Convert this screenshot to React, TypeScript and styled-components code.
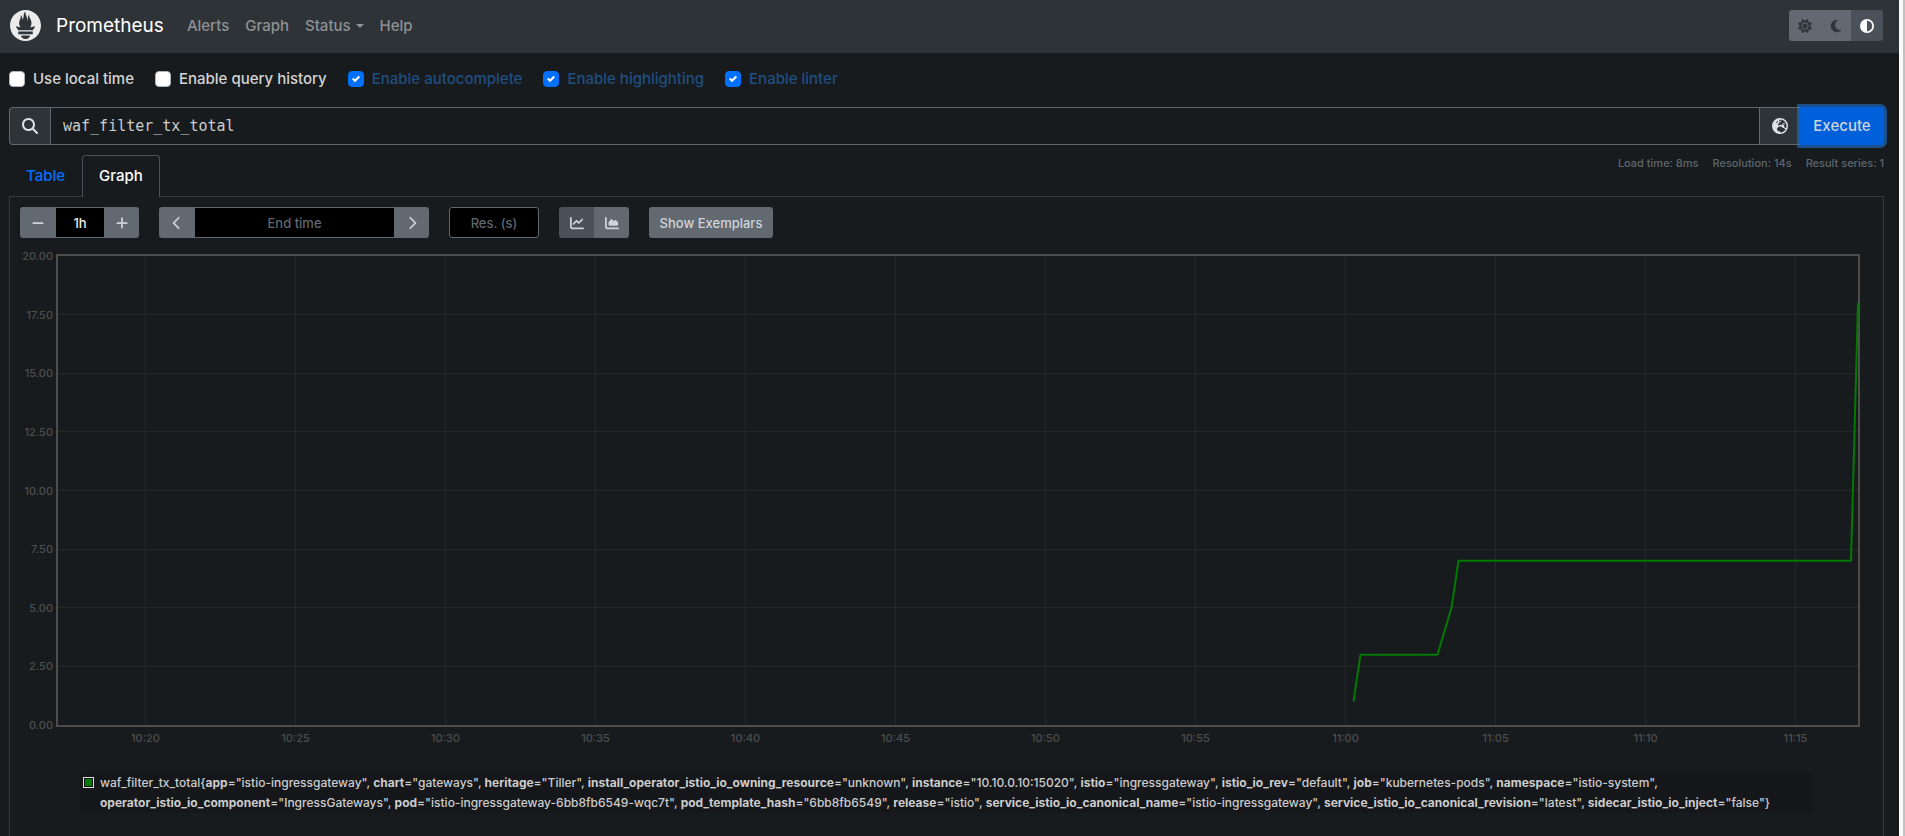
import React, { useState } from 'react';
import styled, { createGlobalStyle } from 'styled-components';
import { SiPrometheus } from 'react-icons/si';
import {
  FaChartArea,
  FaChartLine,
  FaChevronLeft,
  FaChevronRight,
  FaCircleHalfStroke,
  FaEarthEurope,
  FaMagnifyingGlass,
  FaMinus,
  FaMoon,
  FaPlus,
  FaSun,
} from 'react-icons/fa6';

const color = {
  page: '#171b1e',
  bar: '#2e3337',
  text: '#d4d4d4',
  muted: '#5f666d',
  link: '#0070ff',
  checked: '#204e80',
  line: '#343a40',
  border: '#5f6871',
  button: '#626971',
  buttonActive: '#4b5158',
  buttonText: '#ced4da',
  axis: '#4f4d4c',
  tick: '#4d4d4d',
  series: '#007a00',
};

const GlobalStyle = createGlobalStyle`
  *, *::before, *::after { box-sizing: border-box; }
  html { background: ${color.page}; }
  body {
    margin: 0;
    background: ${color.page};
    color: ${color.text};
    font-family: Inter, "Liberation Sans", sans-serif;
    font-size: 15px;
    font-weight: 500;
    line-height: 24px;
    overflow: hidden;
  }
  button, input { font: inherit; color: inherit; margin: 0; }
  a { text-decoration: none; }
`;

const Screen = styled.div`
  display: flex;
  height: 100vh;
  overflow: hidden;
`;

const Page = styled.div`
  flex: 1;
  min-width: 0;
`;

const ScrollTrack = styled.div`
  width: 6px;
  background: #fafafa;
  border-right: 2px solid #c1c1c1;
`;

const Navbar = styled.header`
  display: flex;
  align-items: center;
  justify-content: space-between;
  height: 53px;
  padding: 0 16px 2px 10px;
  background: ${color.bar};
`;

const NavGroup = styled.nav`
  display: flex;
  align-items: center;
  gap: 16px;
`;

const Brand = styled.a`
  display: flex;
  align-items: center;
  gap: 15px;
  margin-right: 7px;
  color: #ffffff;
  font-size: 19px;
  font-weight: 400;
  svg { width: 31px; height: 31px; color: #ebebeb; }
`;

const NavLink = styled.a`
  display: flex;
  align-items: center;
  gap: 5px;
  color: #8f9193;
`;

const Caret = styled.span`
  border: 4px solid transparent;
  border-top-color: currentColor;
  border-bottom: 0;
`;

const ButtonGroup = styled.div`
  display: flex;
  border-radius: 3px;
  overflow: hidden;
`;

const IconButton = styled.button<{ $active?: boolean; $width?: number }>`
  display: flex;
  align-items: center;
  justify-content: center;
  width: ${p => p.$width ?? 35}px;
  height: 31px;
  padding: 0;
  border: 0;
  background: ${p => (p.$active ? color.buttonActive : color.button)};
  color: ${color.buttonText};
  font-size: 14px;
`;

const ThemeButton = styled(IconButton)`
  color: ${p => (p.$active ? '#ffffff' : '#31363b')};
`;

const Options = styled.div`
  display: flex;
  gap: 21px;
  padding: 14px 9px 16px;
`;

const Option = styled.label<{ $on: boolean }>`
  display: flex;
  align-items: center;
  gap: 8px;
  color: ${p => (p.$on ? color.checked : color.text)};
`;

const CheckBox = styled.input`
  appearance: none;
  width: 16px;
  height: 16px;
  border: 1px solid #adb5bd;
  border-radius: 4px;
  background: #ffffff;
  &:checked {
    border-color: ${color.link};
    background: ${color.link};
  }
`;

const BoxHolder = styled.span`
  display: grid;
  > * { grid-area: 1 / 1; }
  svg { width: 8px; height: 8px; place-self: center; pointer-events: none; }
`;

const Panel = styled.main`
  padding: 0 15px 0 9px;
`;

const Expression = styled.form`
  display: flex;
  height: 38px;
`;

const Addon = styled.span`
  display: flex;
  align-items: center;
  justify-content: center;
  width: 41px;
  border: 1px solid ${color.border};
  border-right: 0;
  border-radius: 4px 0 0 4px;
  background: ${color.bar};
  color: #dee2e6;
  font-size: 16px;
`;

const ExplorerButton = styled.button`
  width: 40px;
  padding: 0;
  border: 1px solid ${color.border};
  border-width: 1px 0;
  background: ${color.bar};
  color: #dee2e6;
  font-size: 16px;
  line-height: 0;
`;

const ExpressionInput = styled.input`
  flex: 1;
  min-width: 0;
  padding: 0 12px;
  border: 1px solid ${color.border};
  background: transparent;
  color: #cccccc;
  font-family: "DejaVu Sans Mono", monospace;
  font-size: 15px;
  outline: 0;
`;

const ExecuteButton = styled.button`
  width: 84px;
  padding: 0;
  border: 0;
  border-radius: 0 4px 4px 0;
  background: #005fdb;
  box-shadow: 0 0 0 3px rgba(30, 122, 232, 0.55);
  color: #ced4da;
`;

const TabRow = styled.div`
  display: flex;
  justify-content: space-between;
  align-items: flex-start;
  padding-top: 10px;
`;

const Tabs = styled.div`
  display: flex;
  position: relative;
  z-index: 1;
  margin-bottom: -1px;
`;

const Tab = styled.a<{ $active?: boolean }>`
  height: 42px;
  padding: 8px 16px;
  border: 1px solid ${p => (p.$active ? '#495057' : 'transparent')};
  border-bottom: 0;
  border-radius: 4px 4px 0 0;
  background: ${p => (p.$active ? color.page : 'transparent')};
  color: ${p => (p.$active ? '#ffffff' : color.link)};
`;

const Stats = styled.div`
  display: flex;
  gap: 14px;
  color: ${color.muted};
  font-size: 11px;
  line-height: 16px;
`;

const TabContent = styled.section`
  min-height: 100vh;
  padding: 10px;
  border: 1px solid ${color.line};
  font-size: 14px;
`;

const Controls = styled.div`
  display: flex;
  gap: 20px;
  height: 31px;
`;

const SmallInput = styled.input<{ $width: number; $alone?: boolean }>`
  width: ${p => p.$width}px;
  height: 31px;
  padding: 0;
  border: solid ${color.border};
  border-width: ${p => (p.$alone ? '1px' : '1px 0')};
  border-radius: ${p => (p.$alone ? '3px' : '0')};
  background: #000000;
  color: #eeeeee;
  text-align: center;
  font-size: 13px;
  outline: 0;
  &::placeholder { color: ${color.muted}; opacity: 1; }
`;

const TextButton = styled.button`
  width: 124px;
  padding: 0;
  border: 0;
  border-radius: 3px;
  background: ${color.button};
  color: ${color.buttonText};
  font-size: 13px;
`;

const Chart = styled.div`
  display: grid;
  grid-template-columns: 36px 1fr;
  margin: 16px 13px 0 0;
`;

const PlotFrame = styled.div`
  height: 473px;
  border: 2px solid ${color.axis};
`;

const Drawing = styled.svg`
  display: block;
  width: 100%;
  height: 100%;
  overflow: visible;
  line { stroke: #25282a; stroke-width: 1; shape-rendering: crispEdges; }
  text { fill: ${color.tick}; font-size: 11px; }
  polyline { fill: none; stroke: ${color.series}; stroke-width: 2; stroke-linejoin: round; }
`;

const Legend = styled.div`
  display: flex;
  gap: 6px;
  width: fit-content;
  max-width: 1733px;
  margin: 46px 60px 0;
  padding: 0 14px 0 3px;
  border-radius: 4px;
  background: #15171a;
  color: #cccccc;
  font-size: 12px;
  line-height: 20px;
`;

const Swatch = styled.span`
  flex: none;
  width: 11px;
  height: 11px;
  margin-top: 4px;
  border: 1px solid #dddddd;
  background: ${color.series};
  box-shadow: inset 0 0 0 1px #111111;
`;

const times = ['10:20', '10:25', '10:30', '10:35', '10:40', '10:45', '10:50', '10:55', '11:00', '11:05', '11:10', '11:15'];
const values = [20, 17.5, 15, 12.5, 10, 7.5, 5, 2.5, 0];

/* Seconds since the start of the one-hour window, and the value then. */
const samples: [number, number][] = [
  [2591, 1],
  [2605, 3],
  [2759, 3],
  [2787, 5],
  [2801, 7],
  [3586, 7],
  [3600, 18],
];

const labels: [string, string][] = [
  ['app', 'istio-ingressgateway'],
  ['chart', 'gateways'],
  ['heritage', 'Tiller'],
  ['install_operator_istio_io_owning_resource', 'unknown'],
  ['instance', '10.10.0.10:15020'],
  ['istio', 'ingressgateway'],
  ['istio_io_rev', 'default'],
  ['job', 'kubernetes-pods'],
  ['namespace', 'istio-system'],
  ['operator_istio_io_component', 'IngressGateways'],
  ['pod', 'istio-ingressgateway-6bb8fb6549-wqc7t'],
  ['pod_template_hash', '6bb8fb6549'],
  ['release', 'istio'],
  ['service_istio_io_canonical_name', 'istio-ingressgateway'],
  ['service_istio_io_canonical_revision', 'latest'],
  ['sidecar_istio_io_inject', 'false'],
];

const NoWrap = styled.span`
  white-space: nowrap;
`;

const timeX = (i: number) => `${((175 + i * 300) / 3600) * 100}%`;
const valueY = (v: number) => `${100 - v * 5}%`;

function Graph() {
  return (
    <Drawing role="img" aria-label="waf_filter_tx_total over the last hour">
      {times.map((t, i) => (
        <g key={t}>
          <line x1={timeX(i)} x2={timeX(i)} y1="0" y2="100%" />
          <text x={timeX(i)} y="100%" dy="17" textAnchor="middle">{t}</text>
        </g>
      ))}
      {values.map(v => (
        <g key={v}>
          {v > 0 && v < 20 && <line x1="0" x2="100%" y1={valueY(v)} y2={valueY(v)} />}
          <text x="0" y={valueY(v)} dx="-5" dy="4" textAnchor="end">{v.toFixed(2)}</text>
        </g>
      ))}
      <svg width="100%" height="100%" viewBox="0 0 3600 20" preserveAspectRatio="none" overflow="visible">
        <polyline
          vectorEffect="non-scaling-stroke"
          points={samples.map(([t, v]) => `${t},${20 - v}`).join(' ')}
        />
      </svg>
    </Drawing>
  );
}

function ToggleOption({ label, initial }: { label: string; initial: boolean }) {
  const [on, setOn] = useState(initial);
  return (
    <Option $on={on}>
      <BoxHolder>
        <CheckBox type="checkbox" checked={on} onChange={e => setOn(e.target.checked)} />
        {on && (
          <svg viewBox="0 0 8 8">
            <path fill="#fff" d="M6.564.75l-3.59 3.612-1.538-1.55L0 4.26l2.974 2.99L8 2.193z" />
          </svg>
        )}
      </BoxHolder>
      {label}
    </Option>
  );
}

export default function App() {
  const [query, setQuery] = useState('waf_filter_tx_total');
  return (
    <Screen>
      <GlobalStyle />
      <Page>
        <Navbar>
          <NavGroup>
            <Brand href="#"><SiPrometheus />Prometheus</Brand>
            <NavLink href="#alerts">Alerts</NavLink>
            <NavLink href="#graph">Graph</NavLink>
            <NavLink href="#status">Status<Caret /></NavLink>
            <NavLink href="#help">Help</NavLink>
          </NavGroup>
          <ButtonGroup>
            <ThemeButton $width={31} aria-label="Light theme"><FaSun /></ThemeButton>
            <ThemeButton $width={31} aria-label="Dark theme"><FaMoon /></ThemeButton>
            <ThemeButton $width={32} $active aria-label="Browser theme"><FaCircleHalfStroke /></ThemeButton>
          </ButtonGroup>
        </Navbar>
        <Options>
          <ToggleOption label="Use local time" initial={false} />
          <ToggleOption label="Enable query history" initial={false} />
          <ToggleOption label="Enable autocomplete" initial />
          <ToggleOption label="Enable highlighting" initial />
          <ToggleOption label="Enable linter" initial />
        </Options>
        <Panel>
          <Expression onSubmit={e => e.preventDefault()}>
            <Addon><FaMagnifyingGlass /></Addon>
            <ExpressionInput
              aria-label="Expression"
              spellCheck={false}
              value={query}
              onChange={e => setQuery(e.target.value)}
            />
            <ExplorerButton type="button" aria-label="Open metrics explorer"><FaEarthEurope /></ExplorerButton>
            <ExecuteButton type="submit">Execute</ExecuteButton>
          </Expression>
          <TabRow>
            <Tabs>
              <Tab href="#table">Table</Tab>
              <Tab href="#graph" $active>Graph</Tab>
            </Tabs>
            <Stats>
              <span>Load time: 8ms</span>
              <span>Resolution: 14s</span>
              <span>Result series: 1</span>
            </Stats>
          </TabRow>
          <TabContent>
            <Controls>
              <ButtonGroup>
                <IconButton $width={36} aria-label="Decrease range"><FaMinus /></IconButton>
                <SmallInput $width={48} aria-label="Range" defaultValue="1h" />
                <IconButton aria-label="Increase range"><FaPlus /></IconButton>
              </ButtonGroup>
              <ButtonGroup>
                <IconButton $width={36} aria-label="Earlier"><FaChevronLeft /></IconButton>
                <SmallInput $width={199} aria-label="End time" placeholder="End time" />
                <IconButton aria-label="Later"><FaChevronRight /></IconButton>
              </ButtonGroup>
              <SmallInput $width={90} $alone aria-label="Resolution in seconds" placeholder="Res. (s)" />
              <ButtonGroup>
                <IconButton $active aria-label="Line graph"><FaChartLine /></IconButton>
                <IconButton aria-label="Stacked graph"><FaChartArea /></IconButton>
              </ButtonGroup>
              <TextButton>Show Exemplars</TextButton>
            </Controls>
            <Chart>
              <span />
              <PlotFrame><Graph /></PlotFrame>
            </Chart>
            <Legend>
              <Swatch />
              <div>
                waf_filter_tx_total{'{'}
                {labels.map(([name, value], i) => (
                  <React.Fragment key={name}>
                    <NoWrap><b>{name}</b>="{value}"{i < labels.length - 1 ? ',' : '}'}</NoWrap>{' '}
                  </React.Fragment>
                ))}
              </div>
            </Legend>
          </TabContent>
        </Panel>
      </Page>
      <ScrollTrack />
    </Screen>
  );
}
